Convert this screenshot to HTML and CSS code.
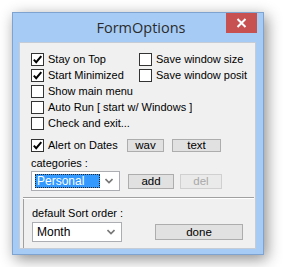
FILE: index.html
```html
<!DOCTYPE html>
<html>
<head>
<meta charset="utf-8">
<link rel="stylesheet" href="styles.css">
</head>
<body>
<div class="window">
  <div class="titlebar">
    <span></span>
    <span class="title">FormOptions</span>
    <span class="close"><svg width="11" height="10" viewBox="0 0 11 10"><path d="M1.5 1 L9.5 9 M9.5 1 L1.5 9" stroke="#fff" stroke-width="2" fill="none"/></svg></span>
  </div>
  <div class="client">
    <div class="rows">
      <div class="row">
        <label class="cb col1"><span class="box"><svg width="11" height="11" viewBox="0 0 11 11"><path d="M1.8 5.6 L4.2 8.2 L9.3 2.2" stroke="#000" stroke-width="2" fill="none"/></svg></span>Stay on Top</label>
        <label class="cb"><span class="box"></span>Save window size</label>
      </div>
      <div class="row">
        <label class="cb col1"><span class="box"><svg width="11" height="11" viewBox="0 0 11 11"><path d="M1.8 5.6 L4.2 8.2 L9.3 2.2" stroke="#000" stroke-width="2" fill="none"/></svg></span>Start Minimized</label>
        <label class="cb"><span class="box"></span>Save window posit</label>
      </div>
      <div class="row">
        <label class="cb"><span class="box"></span>Show main menu</label>
      </div>
      <div class="row">
        <label class="cb"><span class="box"></span>Auto Run [ start w/ Windows ]</label>
      </div>
      <div class="row">
        <label class="cb"><span class="box"></span>Check and exit...</label>
      </div>
    </div>
    <div class="row alert">
      <label class="cb col1a"><span class="box"><svg width="11" height="11" viewBox="0 0 11 11"><path d="M1.8 5.6 L4.2 8.2 L9.3 2.2" stroke="#000" stroke-width="2" fill="none"/></svg></span>Alert on Dates</label>
      <span class="btn wav">wav</span>
      <span class="btn text">text</span>
    </div>
    <div class="label cat">categories :</div>
    <div class="row combo-row">
      <div class="combo"><span class="sel">Personal</span><svg class="arrow" width="8" height="6" viewBox="0 0 8 6"><path d="M0.5 1 L4 4.5 L7.5 1" stroke="#777" stroke-width="1.6" fill="none"/></svg></div>
      <span class="btn add">add</span>
      <span class="btn del">del</span>
    </div>
    <div class="sep"></div>
    <div class="lower">
      <div class="label sort">default Sort order :</div>
      <div class="row month-row">
        <div class="combo month"><span class="val">Month</span><svg class="arrow" width="8" height="6" viewBox="0 0 8 6"><path d="M0.5 1 L4 4.5 L7.5 1" stroke="#777" stroke-width="1.6" fill="none"/></svg></div>
        <span class="btn done">done</span>
      </div>
    </div>
  </div>
</div>
</body>
</html>
```
FILE: styles.css
```css
html, body { margin: 0; padding: 0; background: #fff; }
body { padding: 12px; font-family: "Liberation Sans", Arial, sans-serif; font-size: 11px; color: #000; }

.window {
  width: 252px; height: 243px; box-sizing: border-box;
  border: 1px solid #7fa3d1;
  background: #a6ccf6;
  box-shadow: 3px 4px 14px rgba(0,0,0,0.45);
  display: flex; flex-direction: column;
  padding: 0 7px 5px 6px;
}
.titlebar {
  height: 29px; display: grid; grid-template-columns: 1fr auto 1fr;
  align-items: start; margin: 0 -7px 0 0;
}
.title {
  font-family: "Open Sans", "Noto Sans", sans-serif; font-size: 14.5px; color: #2b2b2b;
  line-height: 18px; margin-top: 6px;
}
.close {
  justify-self: end; width: 31px; height: 20px; background: #c75050;
  margin-right: 6px; display: flex; align-items: center; justify-content: center;
}
.client {
  flex: 1; background: #f0f0f0; box-sizing: border-box;
  border: 1px solid #c5ccd6;
  padding: 0 0 0 11px; display: flex; flex-direction: column;
}
.rows { margin-top: 8px; display: flex; flex-direction: column; }
.row { display: flex; align-items: center; height: 16px; }
.cb { display: flex; align-items: center; white-space: nowrap; }
.col1 { width: 108px; }
.box {
  width: 11px; height: 11px; border: 1px solid #333; background: #fff;
  margin-right: 4px; display: inline-flex; flex-shrink: 0;
}
.alert { margin-top: 6px; }
.col1a { width: 96px; }
.btn {
  box-sizing: border-box; border: 1px solid #adadad; background: #e1e1e1;
  display: flex; align-items: center; justify-content: center; height: 13px;
  font-size: 11.5px;
}
.wav { width: 37px; }
.text { width: 49px; margin-left: 8px; }
.label { height: 14px; line-height: 14px; }
.cat { margin-top: 3px; }
.combo-row { height: 20px; margin-top: 1px; }
.combo {
  width: 89px; height: 20px; box-sizing: border-box; border: 1px solid #abadb3;
  background: #fff; display: flex; align-items: center; padding: 0 3px; position: relative;
}
.sel {
  width: 65px; height: 14px; box-sizing: border-box; background: #3399ff; color: #fff;
  border: 1px dotted #222; font-size: 12px; line-height: 12px; padding-left: 1px;
}
.arrow { margin-left: auto; margin-right: 3px; }
.add { width: 46px; height: 15px; margin-left: 8px; }
.del { width: 42px; height: 15px; margin-left: 6px; color: #a8a8a8; border-color: #d0d0d0; background: #eaeaea; }
.sep {
  margin-top: 6px; margin-left: -8px; margin-right: 1px; height: 0;
  border-top: 1px solid #a0a0a0; border-bottom: 1px solid #fff;
}
.lower { border-left: 1px solid #a0a0a0; margin-left: -8px; padding-left: 8px; flex: 1; }
.sort { margin-top: 7px; }
.month-row { height: 20px; margin-top: 2px; }
.month { width: 90px; }
.val { font-size: 12px; padding-left: 1px; }
.done { width: 88px; height: 16px; margin-left: 33px; }
```
